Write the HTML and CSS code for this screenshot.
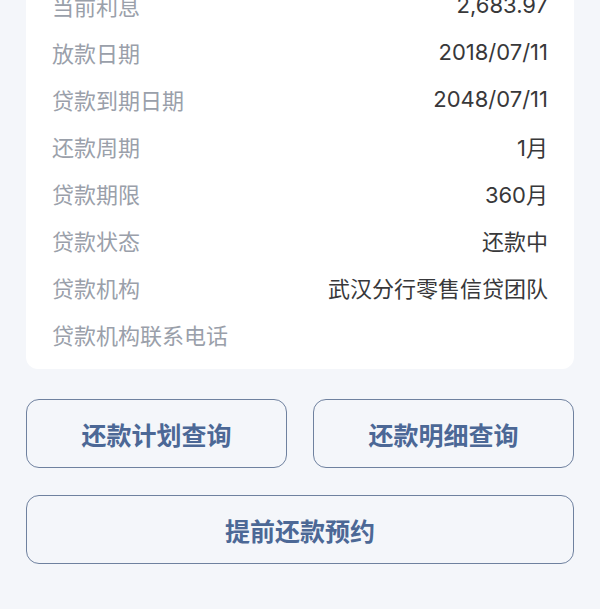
FILE: index.html
```html
<!DOCTYPE html>
<html lang="zh-CN">
<head>
<meta charset="utf-8">
<link rel="stylesheet" href="styles.css">
</head>
<body>
<div class="page">
  <div class="card">
    <div class="row"><span class="label">当前利息</span><span class="value">2,683.97</span></div>
    <div class="row"><span class="label">放款日期</span><span class="value">2018/07/11</span></div>
    <div class="row"><span class="label">贷款到期日期</span><span class="value">2048/07/11</span></div>
    <div class="row"><span class="label">还款周期</span><span class="value">1月</span></div>
    <div class="row"><span class="label">贷款期限</span><span class="value">360月</span></div>
    <div class="row"><span class="label">贷款状态</span><span class="value">还款中</span></div>
    <div class="row"><span class="label">贷款机构</span><span class="value">武汉分行零售信贷团队</span></div>
    <div class="row"><span class="label">贷款机构联系电话</span><span class="value"></span></div>
  </div>
  <div class="actions">
    <button class="btn">还款计划查询</button>
    <button class="btn">还款明细查询</button>
    <button class="btn wide">提前还款预约</button>
  </div>
</div>
</body>
</html>
```
FILE: styles.css
```css
html, body {
  margin: 0;
  padding: 0;
  background: #f4f6fa;
}
body {
  font-family: "Inter", "Noto Sans CJK SC", sans-serif;
  overflow: hidden;
}
.page {
  padding: 0 26px;
}
.card {
  background: #ffffff;
  border-radius: 12px;
  margin-top: -19px;
  padding: 0 26px 12px 26px;
}
.row {
  height: 47px;
  display: flex;
  align-items: center;
  justify-content: space-between;
  font-size: 22px;
}
.label {
  color: #9aa0aa;
}
.value {
  color: #38383a;
}
.actions {
  margin-top: 30px;
  display: grid;
  grid-template-columns: 1fr 1fr;
  column-gap: 26px;
  row-gap: 27px;
}
.btn {
  height: 69px;
  background: transparent;
  border: 1.6px solid #6f819f;
  border-radius: 13px;
  color: #4c6896;
  font-family: "Noto Sans CJK SC", sans-serif;
  font-size: 25px;
  font-weight: 700;
  padding: 0;
}
.btn.wide {
  grid-column: 1 / 3;
}
```
